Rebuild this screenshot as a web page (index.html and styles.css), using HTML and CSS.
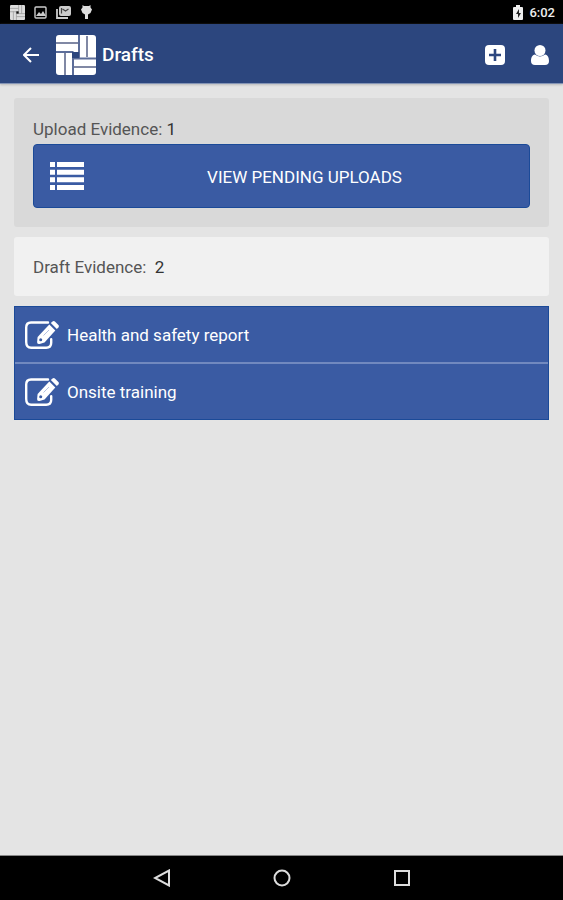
FILE: index.html
```html
<!DOCTYPE html>
<html lang="en">
<head>
  <meta charset="UTF-8">
  <meta name="viewport" content="width=device-width, initial-scale=1.0">
  <title>Drafts</title>
  <link rel="stylesheet" href="styles.css">
</head>
<body>
  <div class="status-bar">
    <div class="status-icons">
      <svg width="15" height="15" viewBox="0 0 40 40">
        <rect width="40" height="40" rx="3" fill="#ddd"/>
        <path d="M0 9h23M0 18h23M23 0v23M31 0v23M17 23h23M17 31h23M17 17v23M9 17v23" stroke="#999" stroke-width="2"/>
        <path d="M17 17h6v6h-6z" fill="#111"/>
      </svg>
      <svg width="13" height="13" viewBox="0 0 13 13">
        <rect x="1" y="1" width="11" height="11" rx="1" fill="none" stroke="#ccc" stroke-width="1.4"/>
        <path d="M2 10l3-4 2 2 2-3 3 5z" fill="#ccc"/>
      </svg>
      <svg width="16" height="14" viewBox="0 0 16 14">
        <path d="M1 4v9h11" fill="none" stroke="#ccc" stroke-width="1.8"/>
        <rect x="3" y="1" width="12" height="10" rx="2" fill="#ccc"/>
        <path d="M5.500 3v5.500M6.500 4l3 2 3-2" fill="none" stroke="#444" stroke-width="1.2"/>
      </svg>
      <svg width="11" height="15" viewBox="0 0 11 15">
        <path d="M1.500 0l1.500 1h5L9.500 0v2.500L11 4.500 9.500 8 7 9.500V14H4V9.500L1.500 8 0 4.500l1.500-2z" fill="#ddd"/>
      </svg>
    </div>
    <div class="status-clock">
      <svg width="10" height="15" viewBox="0 0 10 15">
        <path d="M3 0h4v2h2q1 0 1 1v11q0 1-1 1H1q-1 0-1-1V3q0-1 1-1h2z" fill="#eee"/>
        <path d="M6 4L3 9h2v4l3-5H6z" fill="#222"/>
      </svg>
      <span>6:02</span>
    </div>
  </div>

  <header class="app-bar">
    <button class="icon-button" aria-label="Back">
      <svg width="16" height="16" viewBox="0 0 16 16">
        <path d="M16 8H2M8 1L1 8l7 7" fill="none" stroke="#fff" stroke-width="2"/>
      </svg>
    </button>
    <svg class="logo" width="40" height="40" viewBox="0 0 40 40">
      <rect width="40" height="40" rx="3" fill="#fff"/>
      <path d="M0 8h22M31 1v21M18 32h22M9 18v22" stroke="#8088a4" stroke-width="2"/>
      <path d="M0 17h17.500M23 0v22.500M40 23.500H18M17 40V17" fill="none" stroke="#5c6d99" stroke-width="2"/>
      <path d="M16 17h7v6h-7z" fill="#2c467e"/>
    </svg>
    <h1>Drafts</h1>
    <div class="actions">
      <button class="icon-button" aria-label="Add">
        <svg width="20" height="20" viewBox="0 0 20 20">
          <rect width="20" height="20" rx="4" fill="#fff"/>
          <path d="M10 4v12M4 10h12" stroke="#2c467e" stroke-width="2.600"/>
        </svg>
      </button>
      <button class="icon-button" aria-label="Profile">
        <svg width="18" height="20" viewBox="0 0 18 20">
          <path d="M4 9.500C1 10 0 13 0 16q0 4 4 4h10q4 0 4-4c0-3-1-6-4-6.500q-5 4-10 0z" fill="#fff"/>
          <circle cx="9" cy="5.500" r="5.500" fill="#fff"/>
        </svg>
      </button>
    </div>
  </header>

  <main>
    <section class="card uploads">
      <p>Upload Evidence: <span class="count">1</span></p>
      <button class="view-button">
        <svg width="34" height="28" viewBox="0 0 34 28">
          <path d="M0 0h5v5H0zM7 0h27v5H7zM0 7.700h5v5H0zM7 7.700h27v5H7zM0 15.300h5v5H0zM7 15.300h27v5H7zM0 23h5v5H0zM7 23h27v5H7z" fill="#fff"/>
        </svg>
        <span>VIEW PENDING UPLOADS</span>
      </button>
    </section>

    <section class="card drafts">
      <p>Draft Evidence: &nbsp;<span class="count">2</span></p>
    </section>

    <ul class="draft-list">
      <li>
        <a href="#">
          <svg width="34" height="28" viewBox="0 0 34 28">
            <use href="#edit"/>
          </svg>
          Health and safety report
        </a>
      </li>
      <li>
        <a href="#">
          <svg width="34" height="28" viewBox="0 0 34 28">
            <use href="#edit"/>
          </svg>
          Onsite training
        </a>
      </li>
    </ul>
  </main>

  <nav class="nav-bar">
    <button class="icon-button" aria-label="System back">
      <svg width="18" height="18" viewBox="0 0 18 18">
        <path d="M16 1.500v15L2 9z" fill="none" stroke="#ddd" stroke-width="2"/>
      </svg>
    </button>
    <button class="icon-button" aria-label="Home">
      <svg width="18" height="18" viewBox="0 0 18 18">
        <circle cx="9" cy="9" r="7.500" fill="none" stroke="#ddd" stroke-width="2"/>
      </svg>
    </button>
    <button class="icon-button" aria-label="Recent apps">
      <svg width="18" height="18" viewBox="0 0 18 18">
        <rect x="2" y="2" width="14" height="14" fill="none" stroke="#ddd" stroke-width="2"/>
      </svg>
    </button>
  </nav>

  <svg class="symbols" width="0" height="0">
    <symbol id="edit" viewBox="0 0 34 28">
      <path d="M23 1.500H6Q1.200 1.500 1.200 6.500v14.500q0 5.800 5 5.800h15q5 0 5-5v-3.500" fill="none" stroke="#fff" stroke-width="2.400" stroke-linecap="round"/>
      <path d="M24.300 3.600l6 6L19.500 21.500l-5 1.500q-2.600.5-2.400-2l.5-5z" fill="#fff"/>
      <path d="M25.800 2.100L27.500.6q1.200-1 2.400 0l3.500 3.500q1 1.200 0 2.400L31.800 8.100z" fill="#fff"/>
      <path d="M24 9l-5.500 5.500" stroke="#b4c1e0" stroke-width="1"/>
      <circle cx="15.700" cy="18.800" r="1.500" fill="#3a5ba3"/>
    </symbol>
  </svg>
</body>
</html>
```
FILE: styles.css
```css
* {
  box-sizing: border-box;
}

body {
  font-family: Roboto, sans-serif;
  background: #e4e4e4;
  color: #555;
  margin: 0;
  min-height: 100vh;
  display: flex;
  flex-direction: column;
}

svg {
  display: block;
  flex-shrink: 0;
}

h1,
p,
ul {
  margin: 0;
  padding: 0;
}

.icon-button {
  background: none;
  border: none;
  padding: 0;
  cursor: pointer;
}

.status-bar {
  background: #000;
  color: #eee;
  height: 24px;
  padding: 0 8px 0 10px;
  display: flex;
  align-items: center;
  justify-content: space-between;
}

.status-icons {
  display: flex;
  align-items: center;
  gap: 9px;
}

.status-clock {
  display: flex;
  align-items: center;
  gap: 6px;
  font-size: 13px;
  font-weight: 500;
}

.app-bar {
  background: #2c467e;
  height: 60px;
  padding: 2px 14px 0 23px;
  display: flex;
  align-items: center;
  border-bottom: 1px solid #8494b5;
  box-shadow: 0 1px 2px #bbb;
}

.logo {
  margin-left: 17px;
}

h1 {
  color: #fff;
  font-size: 19px;
  font-weight: 500;
  margin-left: 6px;
}

.actions {
  display: flex;
  align-items: center;
  gap: 26px;
  margin-left: auto;
}

main {
  flex: 1;
  padding: 14px;
  display: flex;
  flex-direction: column;
  gap: 10px;
}

.card {
  border-radius: 3px;
  padding: 21px 19px 19px;
  font-size: 17px;
  line-height: 20px;
}

.uploads {
  background: #d9d9d9;
}

.drafts {
  background: #f1f1f1;
  padding-top: 20px;
}

.count {
  color: #333;
}

.view-button {
  background: #3a5ba3;
  color: #fff;
  border: 1px solid #1b4a98;
  border-radius: 4px;
  width: 100%;
  height: 64px;
  margin-top: 5px;
  padding: 0 16px;
  display: flex;
  align-items: center;
  font-family: inherit;
  font-size: 17px;
  cursor: pointer;
}

.view-button span {
  flex: 1;
  text-align: center;
  padding: 1px 0 0 12px;
}

.draft-list {
  list-style: none;
  background: #3a5ba3;
  border: 1px solid #1b4a98;
}

.draft-list li + li {
  border-top: 2px solid #7189bf;
}

.draft-list a {
  color: #fff;
  font-size: 17px;
  text-decoration: none;
  height: 55px;
  padding: 0 10px;
  display: flex;
  align-items: center;
  gap: 8px;
}

.nav-bar {
  background: #000;
  height: 45px;
  border-top: 1px solid #888;
  display: flex;
  align-items: center;
  justify-content: center;
  gap: 102px;
}

.symbols {
  position: absolute;
}
```
